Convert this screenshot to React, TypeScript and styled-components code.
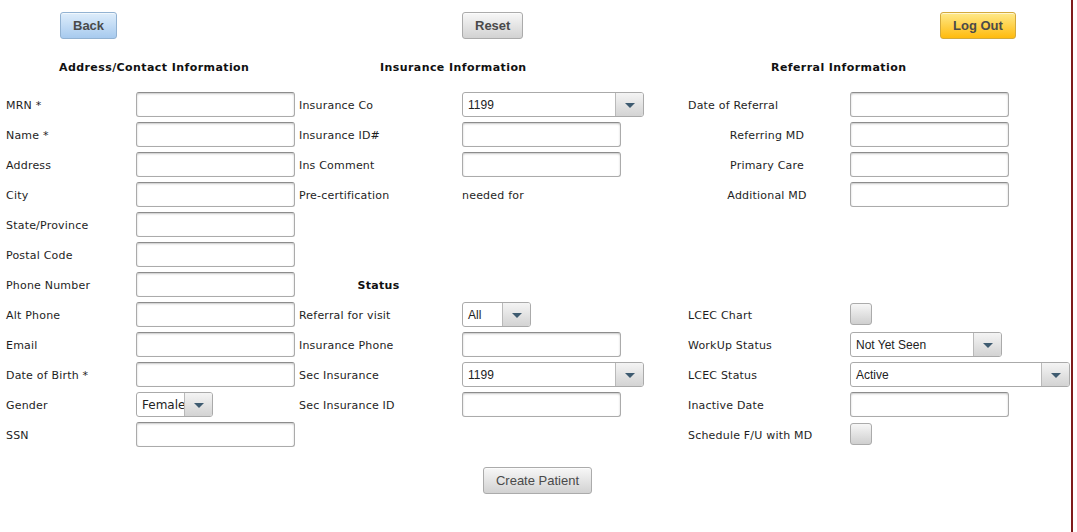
import React from "react";
import styled, { createGlobalStyle } from "styled-components";

const Global = createGlobalStyle`
  html, body { margin: 0; padding: 0; background: #fff; }
  body { font-family: "DejaVu Sans", Verdana, sans-serif; }
`;

const COLS = "136px 163px 163px 226px 162px 1fr";

const Page = styled.div`
  width: 1071px;
  min-height: 100vh;
  border-right: 2px solid #7d1c1c;
`;

const TopBar = styled.div`
  display: grid;
  grid-template-columns: ${COLS};
  padding-top: 12px;
  height: 27px;
`;

const Slot = styled.div<{ $col: string; $pad?: number }>`
  grid-column: ${(p) => p.$col};
  padding-left: ${(p) => p.$pad ?? 0}px;
  display: flex;
  align-items: flex-start;
`;

const variants = {
  blue: { top: "#deedfb", bottom: "#a7caee", border: "#92b2d2" },
  gray: { top: "#f7f7f7", bottom: "#d2d2d2", border: "#ababab" },
  gold: { top: "#fee98a", bottom: "#ffbb0e", border: "#d3aa3c" },
};

const Button = styled.button<{ $variant: keyof typeof variants; $bold?: boolean }>`
  height: 27px;
  padding: 0 12px;
  font-family: "Liberation Sans", Arial, sans-serif;
  font-size: 13px;
  font-weight: ${(p) => (p.$bold ? 700 : 400)};
  color: #4a4a4a;
  border-radius: 3px;
  border: 1px solid ${(p) => variants[p.$variant].border};
  background: linear-gradient(
    to bottom,
    ${(p) => variants[p.$variant].top},
    ${(p) => variants[p.$variant].bottom}
  );
  box-shadow: inset 0 1px 0 rgba(255, 255, 255, 0.6);
  cursor: pointer;
`;

const HeaderRow = styled.div`
  display: grid;
  grid-template-columns: ${COLS};
  margin-top: 18px;
  margin-bottom: 12px;
  height: 20px;
  align-items: center;
`;

const SectionTitle = styled.h3<{ $col: string; $pad: number }>`
  margin: 0;
  grid-column: ${(p) => p.$col};
  padding-left: ${(p) => p.$pad}px;
  font-size: 11px;
  font-weight: 700;
  color: #111;
  letter-spacing: 0.42px;
`;

const FormGrid = styled.div`
  display: grid;
  grid-template-columns: ${COLS};
  grid-auto-rows: 30px;
  align-items: center;
`;

const Label = styled.label<{ $pad?: number; $center?: boolean }>`
  font-size: 11px;
  letter-spacing: 0.2px;
  color: #1e1e1e;
  padding-top: 2px;
  padding-left: ${(p) => p.$pad ?? 0}px;
  padding-right: ${(p) => (p.$center ? 4 : 0)}px;
  text-align: ${(p) => (p.$center ? "center" : "left")};
  white-space: nowrap;
`;

const Status = styled.h4`
  margin: 0;
  padding-top: 2px;
  font-size: 11px;
  font-weight: 700;
  color: #111;
  text-align: center;
  padding-right: 4px;
  letter-spacing: 0.3px;
`;

const Empty = styled.span``;

const TextInput = styled.input`
  width: 159px;
  height: 25px;
  box-sizing: border-box;
  border: 1px solid #ababab;
  border-top-color: #8c8c8c;
  border-radius: 3px;
  box-shadow: inset 0 1px 2px rgba(0, 0, 0, 0.22);
  background: #fff;
  padding: 0 5px;
  font-family: "Liberation Sans", Arial, sans-serif;
  font-size: 12px;
`;

const Combo = styled.div<{ $w: number }>`
  display: flex;
  width: ${(p) => p.$w}px;
  height: 25px;
  box-sizing: border-box;
  border: 1px solid #aaaaaa;
  border-radius: 3px;
  overflow: hidden;
  background: #fff;
`;

const ComboValue = styled.span<{ $verdana?: boolean }>`
  flex: 1;
  min-width: 0;
  padding-left: 5px;
  font-family: ${(p) =>
    p.$verdana ? `"DejaVu Sans", Verdana, sans-serif` : `"Liberation Sans", Arial, sans-serif`};
  font-size: 12px;
  line-height: 24px;
  color: #222;
  white-space: nowrap;
  overflow: hidden;
`;

const ComboArrow = styled.span`
  flex: 0 0 27px;
  border-left: 1px solid #b9b9b9;
  background: linear-gradient(to bottom, #f4f4f4, #d3d3d3);
  display: flex;
  align-items: center;
  justify-content: center;
  &::after {
    content: "";
    margin-top: 3px;
    border-left: 5px solid transparent;
    border-right: 5px solid transparent;
    border-top: 5px solid #3e5b70;
  }
`;

const Checkbox = styled.div`
  width: 22px;
  height: 22px;
  box-sizing: border-box;
  border: 1px solid #ababab;
  border-radius: 3px;
  background: linear-gradient(to bottom, #f6f6f6, #cfcfcf);
`;

const Footer = styled.div`
  display: flex;
  justify-content: center;
  padding-left: 4px;
  margin-top: 18px;
`;

const Select = ({ w, value, verdana }: { w: number; value: string; verdana?: boolean }) => (
  <Combo $w={w}>
    <ComboValue $verdana={verdana}>{value}</ComboValue>
    <ComboArrow />
  </Combo>
);

export default function App() {
  return (
    <>
      <Global />
      <Page>
        <TopBar>
          <Slot $col="1 / 3" $pad={60}>
            <Button $variant="blue" $bold>Back</Button>
          </Slot>
          <Slot $col="4 / 5">
            <Button $variant="gray" $bold>Reset</Button>
          </Slot>
          <Slot $col="6 / 7" $pad={90}>
            <Button $variant="gold" $bold>Log Out</Button>
          </Slot>
        </TopBar>

        <HeaderRow>
          <SectionTitle $col="1 / 3" $pad={59}>Address/Contact Information</SectionTitle>
          <SectionTitle $col="3 / 5" $pad={81}>Insurance Information</SectionTitle>
          <SectionTitle $col="5 / 7" $pad={83}>Referral Information</SectionTitle>
        </HeaderRow>

        <FormGrid>
          <Label $pad={6}>MRN *</Label>
          <TextInput />
          <Label>Insurance Co</Label>
          <Select w={182} value="1199" />
          <Label>Date of Referral</Label>
          <TextInput />

          <Label $pad={6}>Name *</Label>
          <TextInput />
          <Label>Insurance ID#</Label>
          <TextInput />
          <Label $center>Referring MD</Label>
          <TextInput />

          <Label $pad={6}>Address</Label>
          <TextInput />
          <Label>Ins Comment</Label>
          <TextInput />
          <Label $center>Primary Care</Label>
          <TextInput />

          <Label $pad={6}>City</Label>
          <TextInput />
          <Label>Pre-certification</Label>
          <Label>needed for</Label>
          <Label $center>Additional MD</Label>
          <TextInput />

          <Label $pad={6}>State/Province</Label>
          <TextInput />
          <Empty />
          <Empty />
          <Empty />
          <Empty />

          <Label $pad={6}>Postal Code</Label>
          <TextInput />
          <Empty />
          <Empty />
          <Empty />
          <Empty />

          <Label $pad={6}>Phone Number</Label>
          <TextInput />
          <Status>Status</Status>
          <Empty />
          <Empty />
          <Empty />

          <Label $pad={6}>Alt Phone</Label>
          <TextInput />
          <Label>Referral for visit</Label>
          <Select w={69} value="All" />
          <Label>LCEC Chart</Label>
          <Checkbox />

          <Label $pad={6}>Email</Label>
          <TextInput />
          <Label>Insurance Phone</Label>
          <TextInput />
          <Label>WorkUp Status</Label>
          <Select w={152} value="Not Yet Seen" />

          <Label $pad={6}>Date of Birth *</Label>
          <TextInput />
          <Label>Sec Insurance</Label>
          <Select w={182} value="1199" />
          <Label>LCEC Status</Label>
          <Select w={220} value="Active" />

          <Label $pad={6}>Gender</Label>
          <Select w={77} value="Female" verdana />
          <Label>Sec Insurance ID</Label>
          <TextInput />
          <Label>Inactive Date</Label>
          <TextInput />

          <Label $pad={6}>SSN</Label>
          <TextInput />
          <Empty />
          <Empty />
          <Label>Schedule F/U with MD</Label>
          <Checkbox />
        </FormGrid>

        <Footer>
          <Button $variant="gray">Create Patient</Button>
        </Footer>
      </Page>
    </>
  );
}
